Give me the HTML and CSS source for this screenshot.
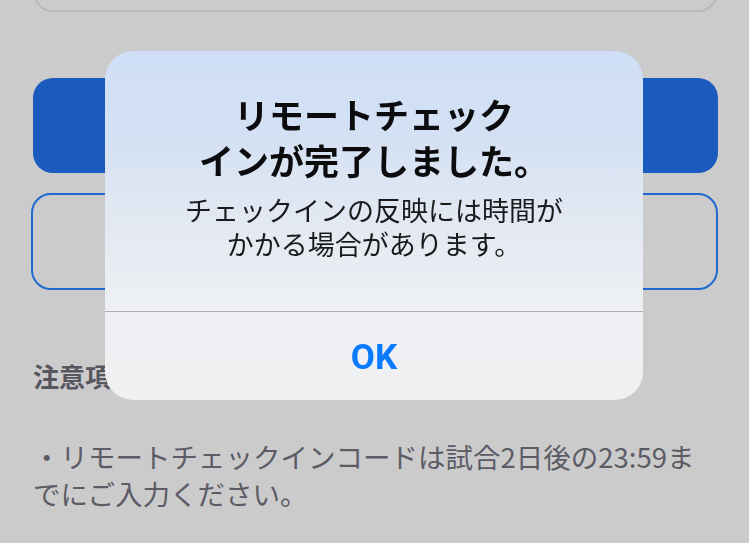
FILE: index.html
```html
<!DOCTYPE html>
<html lang="ja">
<head>
<meta charset="utf-8">
<title>リモートチェックイン</title>
<link rel="stylesheet" href="styles.css">
</head>
<body>
<main class="page">
  <div class="field"></div>
  <div class="btn btn-primary"></div>
  <div class="btn btn-outline"></div>
  <h2 class="notes-title">注意項目</h2>
  <p class="notes-text">・リモートチェックインコードは試合2日後の23:59までにご入力ください。</p>
</main>

<div class="alert" role="alertdialog">
  <div class="alert-body">
    <h1 class="alert-title">リモートチェック<br>インが完了しました。</h1>
    <p class="alert-message">チェックインの反映には時間が<br>かかる場合があります。</p>
  </div>
  <div class="alert-actions">
    <span class="alert-ok">OK</span>
  </div>
</div>
</body>
</html>
```

FILE: styles.css
```css
html, body {
  margin: 0;
  padding: 0;
  background: #cbcbcb;
  width: 749px;
  height: 543px;
  overflow: hidden;
}

body {
  font-family: "Noto Sans CJK JP", "Noto Sans", sans-serif;
}

.page {
  display: flex;
  flex-direction: column;
  padding: 0 31px 0 33px;
}

.field {
  height: 78px;
  margin-top: -66px;
  border: 2px solid #b9b9bd;
  border-radius: 20px;
  box-sizing: border-box;
}

.btn {
  box-sizing: border-box;
  border-radius: 20px;
}

.btn-primary {
  margin-top: 66px;
  height: 95px;
  background: #1b5bbf;
}

.btn-outline {
  margin-top: 20px;
  margin-left: -2px;
  height: 97px;
  border: 2.5px solid #1f6ad0;
}

.notes-title {
  margin: 60px 0 0;
  font-size: 26px;
  line-height: 52px;
  font-weight: 700;
  color: #56565f;
}

.notes-text {
  margin: 36px 0 0;
  font-size: 27.5px;
  line-height: 37px;
  color: #5c5c66;
  font-weight: 400;
}

.alert {
  position: fixed;
  left: 105px;
  top: 51px;
  width: 538px;
  height: 349px;
  border-radius: 28px;
  overflow: hidden;
  display: flex;
  flex-direction: column;
  background: linear-gradient(to bottom, #cfdff7 0%, #d4e1f4 25%, #e3e9f2 50%, #eef0f3 75%, #f0f0f2 100%);
}

.alert-body {
  height: 261px;
  box-sizing: border-box;
  padding: 40px 30px 0;
  text-align: center;
  border-bottom: 1px solid #adadb2;
}

.alert-title {
  margin: 0;
  font-size: 35px;
  line-height: 46px;
  font-weight: 700;
  color: #0c0c0e;
}

.alert-message {
  margin: 10px 0 0;
  font-size: 27px;
  line-height: 34px;
  font-weight: 400;
  color: #1a1a1c;
}

.alert-actions {
  flex: 1;
  display: flex;
  align-items: center;
  justify-content: center;
}

.alert-ok {
  font-family: Roboto, "Noto Sans", sans-serif;
  font-size: 35px;
  font-weight: 700;
  color: #0a7aff;
  margin-top: 2px;
}
```
